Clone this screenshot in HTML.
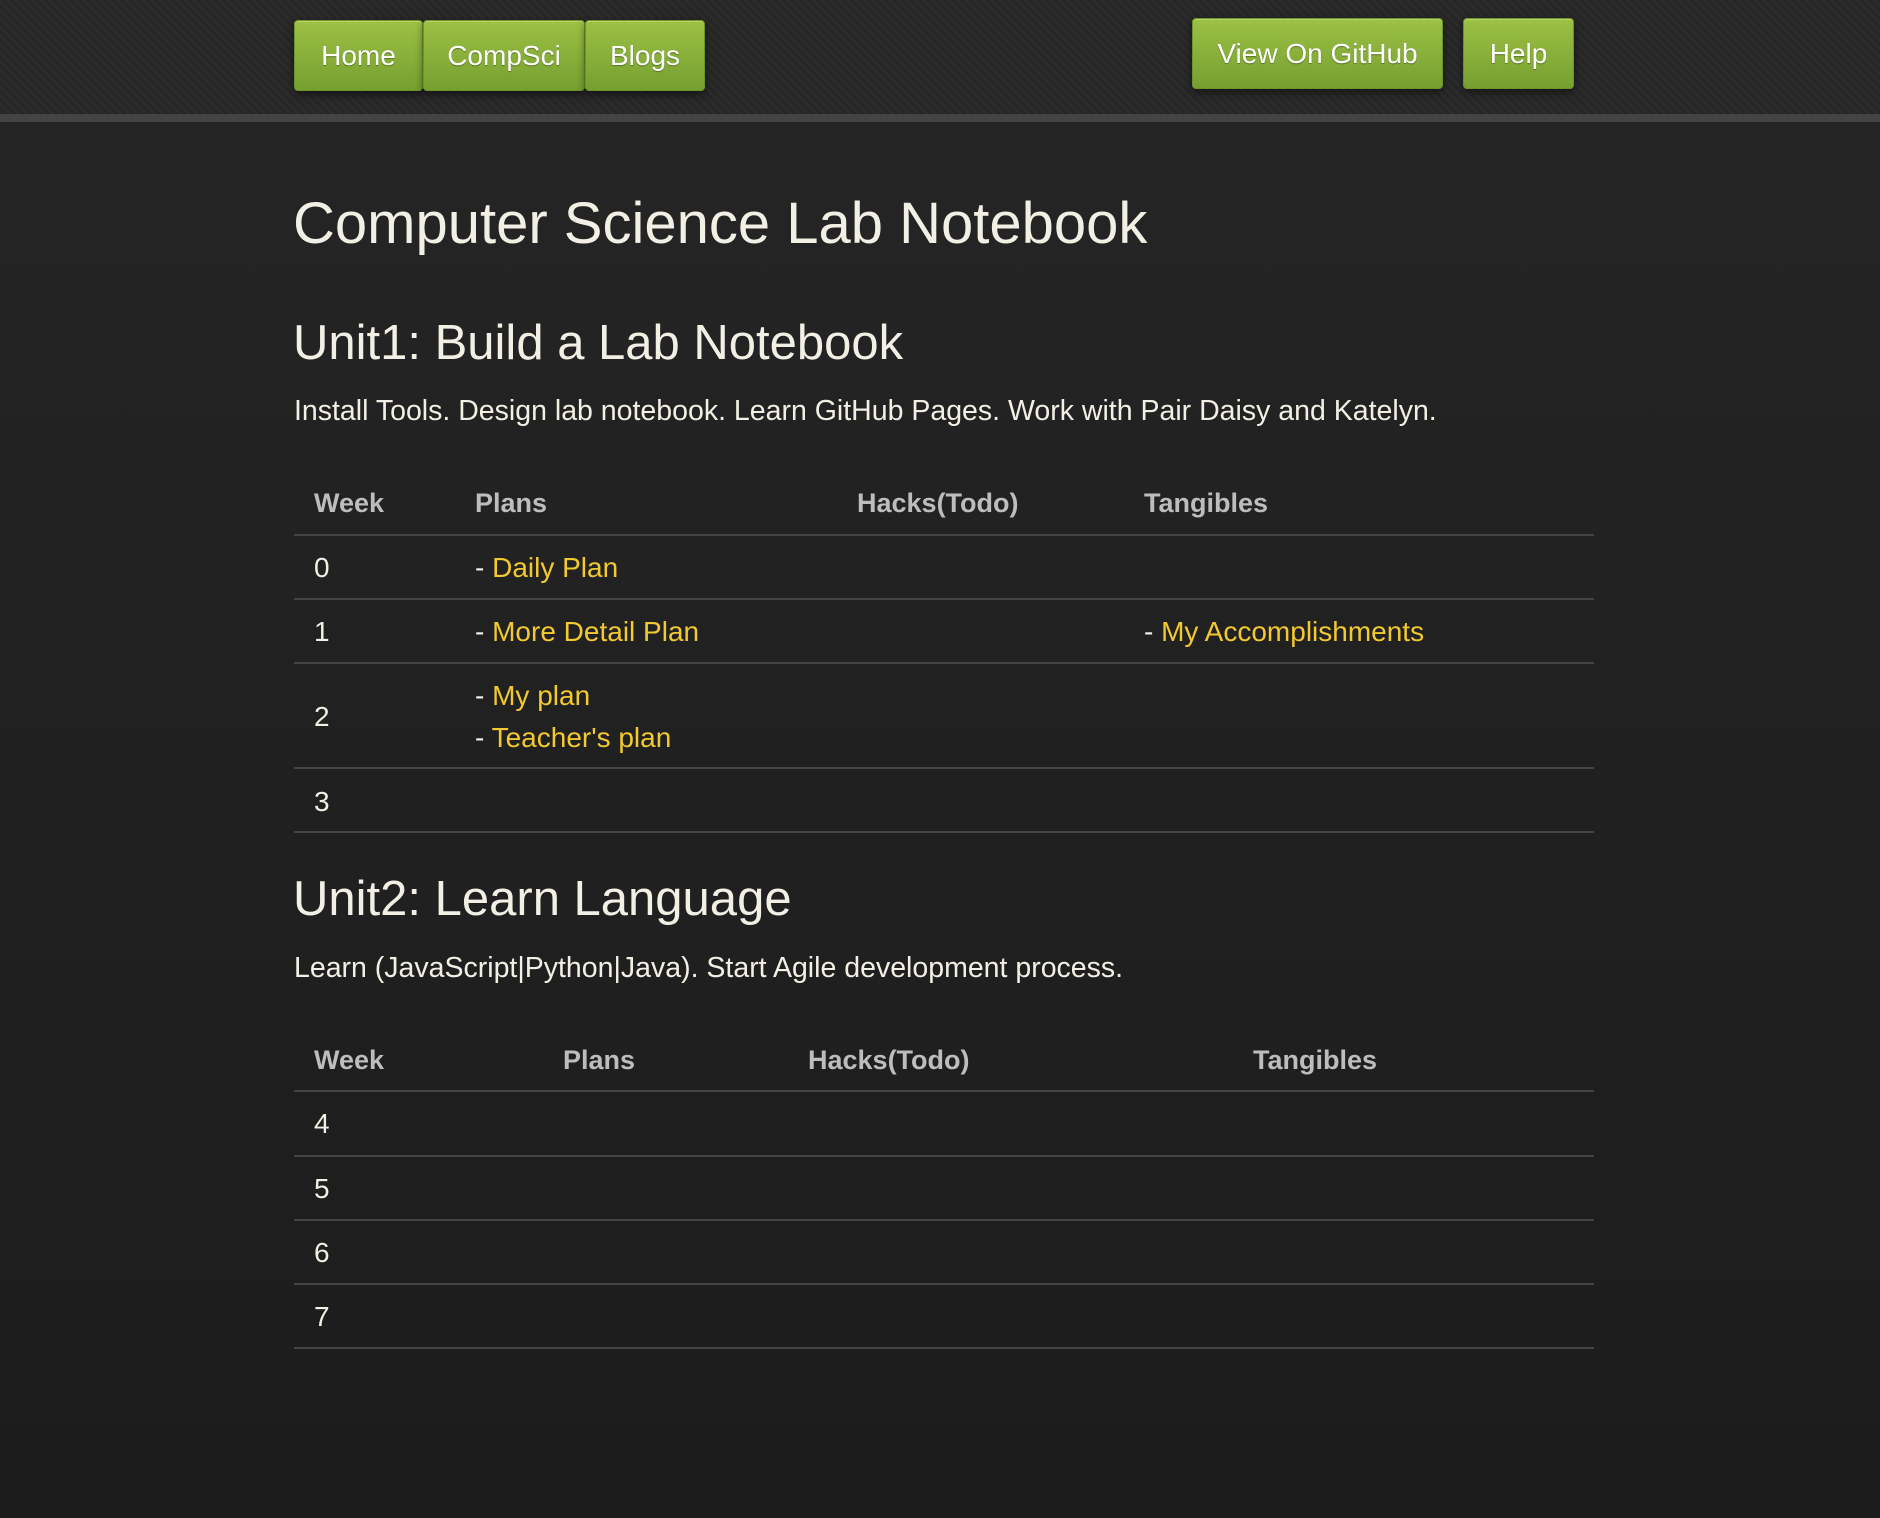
<!DOCTYPE html>
<html><head><meta charset="utf-8">
<style>
*{margin:0;padding:0;box-sizing:border-box}
html,body{width:1880px;height:1518px;overflow:hidden}
body{font-family:"Liberation Sans",sans-serif;color:#f2efe4;
background:linear-gradient(#252525,#1c1c1c);position:relative}
.hdr{position:absolute;left:0;top:0;width:1880px;height:114px;
background:repeating-linear-gradient(45deg,#2b2b2b 0 3px,#262626 3px 6px)}
.band{position:absolute;left:0;top:114px;width:1880px;height:8px;background:#444}
.btn{position:absolute;height:71px;border:1px solid #6c9429;border-radius:4px;
background:linear-gradient(#9dc045,#75a030);color:#fff;font-size:28px;
display:flex;align-items:center;justify-content:center;
text-shadow:0 1px 1px rgba(0,0,0,.35);box-shadow:0 3px 8px rgba(0,0,0,.5),inset 0 1px 0 #b9d56b}
.a{position:absolute;white-space:nowrap;line-height:1}
h1.a{font-weight:normal;font-size:58px}
h2.a{font-weight:normal;font-size:49px}
p.a{font-size:28.5px}
.th{color:#bdbdbd;font-weight:bold;font-size:27px}
.td{font-size:28px}
.y{color:#f2c930}
.ln{position:absolute;left:294px;width:1300px;height:2px;background:#444}
</style></head><body>
<div class="hdr"></div><div class="band"></div>
<div class="btn" style="left:294px;top:20px;width:129px">Home</div>
<div class="btn" style="left:423px;top:20px;width:162px">CompSci</div>
<div class="btn" style="left:585px;top:20px;width:120px">Blogs</div>
<div class="btn" style="left:1192px;top:18px;width:251px">View On GitHub</div>
<div class="btn" style="left:1463px;top:18px;width:111px">Help</div>

<h1 class="a" style="left:293px;top:195px">Computer Science Lab Notebook</h1>
<h2 class="a" style="left:293px;top:319px">Unit1: Build a Lab Notebook</h2>
<p class="a" style="left:294px;top:397px">Install Tools. Design lab notebook. Learn GitHub Pages. Work with Pair Daisy and Katelyn.</p>

<div class="a th" style="left:314px;top:490px">Week</div>
<div class="a th" style="left:475px;top:490px">Plans</div>
<div class="a th" style="left:857px;top:490px">Hacks(Todo)</div>
<div class="a th" style="left:1144px;top:490px">Tangibles</div>
<div class="ln" style="top:534px"></div>
<div class="a td" style="left:314px;top:554px">0</div>
<div class="a td" style="left:475px;top:554px">- <span class="y">Daily Plan</span></div>
<div class="ln" style="top:598px"></div>
<div class="a td" style="left:314px;top:618px">1</div>
<div class="a td" style="left:475px;top:618px">- <span class="y">More Detail Plan</span></div>
<div class="a td" style="left:1144px;top:618px">- <span class="y">My Accomplishments</span></div>
<div class="ln" style="top:662px"></div>
<div class="a td" style="left:314px;top:703px">2</div>
<div class="a td" style="left:475px;top:682px">- <span class="y">My plan</span></div>
<div class="a td" style="left:475px;top:724px">- <span class="y">Teacher's plan</span></div>
<div class="ln" style="top:767px"></div>
<div class="a td" style="left:314px;top:788px">3</div>
<div class="ln" style="top:831px"></div>

<h2 class="a" style="left:293px;top:875px">Unit2: Learn Language</h2>
<p class="a" style="left:294px;top:954px">Learn (JavaScript|Python|Java). Start Agile development process.</p>

<div class="a th" style="left:314px;top:1047px">Week</div>
<div class="a th" style="left:563px;top:1047px">Plans</div>
<div class="a th" style="left:808px;top:1047px">Hacks(Todo)</div>
<div class="a th" style="left:1253px;top:1047px">Tangibles</div>
<div class="ln" style="top:1090px"></div>
<div class="a td" style="left:314px;top:1110px">4</div>
<div class="ln" style="top:1155px"></div>
<div class="a td" style="left:314px;top:1175px">5</div>
<div class="ln" style="top:1219px"></div>
<div class="a td" style="left:314px;top:1239px">6</div>
<div class="ln" style="top:1283px"></div>
<div class="a td" style="left:314px;top:1303px">7</div>
<div class="ln" style="top:1347px"></div>
</body></html>
